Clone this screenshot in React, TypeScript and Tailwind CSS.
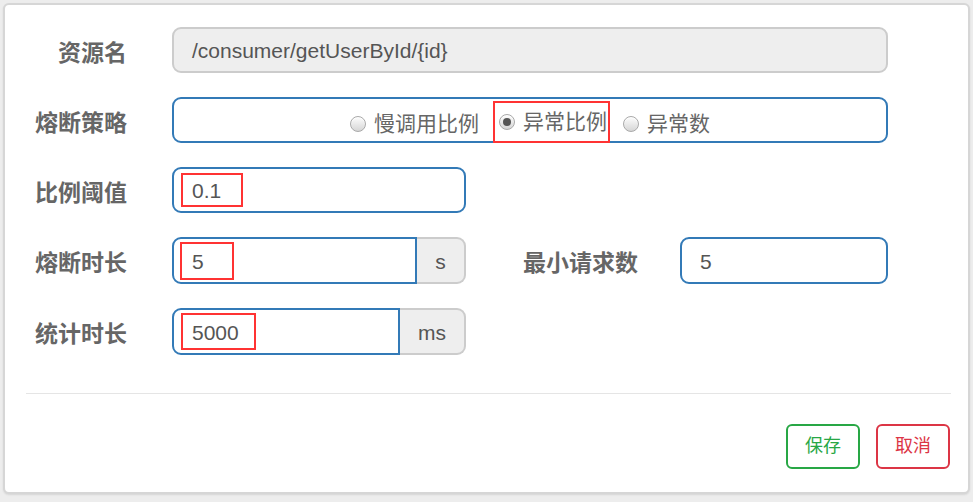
import React from "react";

const font = { fontFamily: '"Liberation Sans", "Noto Sans CJK SC", sans-serif' };

function Label({ children, className = "" }: { children: React.ReactNode; className?: string }) {
  return (
    <div className={`shrink-0 pt-[6px] text-right text-[23px] font-bold text-[#666] ${className}`}>{children}</div>
  );
}

function Radio({ checked }: { checked?: boolean }) {
  return (
    <span className="mr-[8px] inline-flex h-[16px] w-[16px] items-center justify-center rounded-full border border-[#a9a9a9] bg-gradient-to-b from-[#fdfdfd] to-[#d6d6d6] shadow-[inset_0_1px_1px_rgba(255,255,255,0.8)]">
      {checked && <span className="h-[8px] w-[8px] rounded-full bg-[#555]" />}
    </span>
  );
}

export default function App() {
  return (
    <div className="h-[502px] w-[973px] bg-[#ededed] px-[3px] pt-[3px]" style={font}>
      <div className="flex h-[491px] flex-col rounded-[6px] border-2 border-[#d6d6d6] bg-white shadow-[0_1px_2px_rgba(0,0,0,0.1)]">
        <div className="flex flex-col gap-[24px] pt-[22px]">
          {/* 资源名 */}
          <div className="flex items-center">
            <Label className="w-[122px]">资源名</Label>
            <div className="ml-[45px] flex h-[46px] w-[716px] items-center rounded-[9px] border-2 border-[#ccc] bg-[#eee] pl-[18px] pt-[2px] text-[21px] text-[#555]">
              /consumer/getUserById/{"{id}"}
            </div>
          </div>

          {/* 熔断策略 */}
          <div className="flex items-center">
            <Label className="w-[122px]">熔断策略</Label>
            <div className="ml-[45px] flex h-[46px] w-[716px] items-center justify-center rounded-[9px] border-2 border-[#337ab7] pt-[8px] text-[21px] text-[#666]">
              <label className="flex items-center">
                <Radio />
                <span>慢调用比例</span>
              </label>
              <label className="mb-[-2px] ml-[14px] flex h-[42px] items-center self-end border-2 border-[#f33] pl-[4px] pr-[1px]">
                <Radio checked />
                <span>异常比例</span>
              </label>
              <label className="ml-[13px] flex items-center">
                <Radio />
                <span>异常数</span>
              </label>
            </div>
          </div>

          {/* 比例阈值 */}
          <div className="flex items-center">
            <Label className="w-[122px]">比例阈值</Label>
            <div className="ml-[45px] flex h-[46px] w-[294px] items-center rounded-[9px] border-2 border-[#337ab7] pl-[7px] text-[21px] text-[#555]">
              <span className="flex h-[34px] w-[62px] items-center border-2 border-[#f33] pl-[9px] pt-[2px]">0.1</span>
            </div>
          </div>

          {/* 熔断时长 / 最小请求数 */}
          <div className="flex items-center">
            <Label className="w-[122px]">熔断时长</Label>
            <div className="ml-[45px] flex h-[47px] w-[294px]">
              <div className="flex flex-1 items-center rounded-l-[9px] border-2 border-[#337ab7] pl-[6px] text-[21px] text-[#555]">
                <span className="flex h-[38px] w-[54px] items-center border-2 border-[#f33] pl-[10px] pt-[2px]">5</span>
              </div>
              <div className="flex w-[49px] items-center justify-center rounded-r-[9px] border-2 border-l-0 border-[#ccc] bg-[#eee] pt-[2px] text-[21px] text-[#555]">
                s
              </div>
            </div>
            <Label className="ml-[57px]">最小请求数</Label>
            <div className="ml-[42px] flex h-[47px] w-[208px] items-center rounded-[9px] border-2 border-[#337ab7] pl-[18px] pt-[2px] text-[21px] text-[#555]">
              5
            </div>
          </div>

          {/* 统计时长 */}
          <div className="flex items-center">
            <Label className="w-[122px]">统计时长</Label>
            <div className="ml-[45px] flex h-[47px] w-[294px]">
              <div className="flex flex-1 items-center rounded-l-[9px] border-2 border-[#337ab7] pl-[7px] text-[21px] text-[#555]">
                <span className="flex h-[37px] w-[75px] items-center border-2 border-[#f33] pl-[9px] pt-[2px]">5000</span>
              </div>
              <div className="flex w-[66px] items-center justify-center rounded-r-[9px] border-2 border-l-0 border-[#ccc] bg-[#eee] pt-[2px] text-[21px] text-[#555]">
                ms
              </div>
            </div>
          </div>
        </div>

        <div className="mx-[21px] mr-[17px] mt-[38px] h-px bg-[#e5e5e5]" />

        <div className="mt-[30px] flex justify-end gap-[16px] pr-[18px]">
          <button className="h-[45px] w-[74px] rounded-[6px] border-2 border-[#28a745] text-[18px] text-[#28a745]">
            保存
          </button>
          <button className="h-[45px] w-[74px] rounded-[6px] border-2 border-[#dc3545] text-[18px] text-[#dc3545]">
            取消
          </button>
        </div>
      </div>
    </div>
  );
}
